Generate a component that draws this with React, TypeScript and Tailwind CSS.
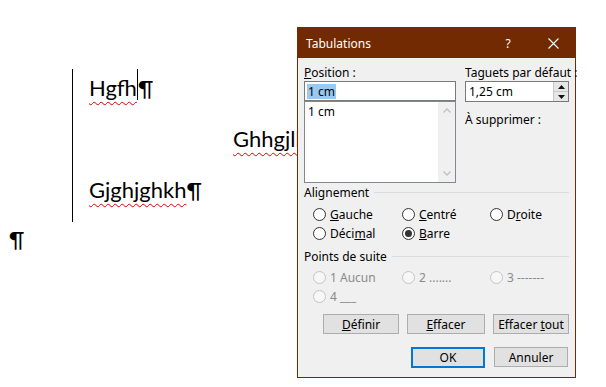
import React from "react";

const ui = { fontFamily: '"Noto Sans", "Open Sans", sans-serif' };
const doc = { fontFamily: 'Lato, "Open Sans", sans-serif' };

function Radio({ checked, disabled }: { checked?: boolean; disabled?: boolean }) {
  return (
    <span
      className={
        "inline-flex items-center justify-center w-[13px] h-[13px] rounded-full border shrink-0 " +
        (disabled ? "border-[#c4c4c4] bg-[#f7f7f7]" : "border-[#333333] bg-white")
      }
    >
      {checked && <span className="w-[7px] h-[7px] rounded-full bg-[#333333]" />}
    </span>
  );
}

function RadioItem({ label, checked, disabled }: { label: React.ReactNode; checked?: boolean; disabled?: boolean }) {
  return (
    <div className="flex items-center gap-[4px] h-[19px]">
      <Radio checked={checked} disabled={disabled} />
      <span className={disabled ? "text-[#8a8a8a]" : "text-black"}>{label}</span>
    </div>
  );
}

function GroupLabel({ children }: { children: React.ReactNode }) {
  return (
    <div className="flex items-center h-[15px]">
      <span className="pr-[5px]">{children}</span>
      <div className="flex-1 h-px bg-[#dcdcdc]" />
    </div>
  );
}

function Btn({ children, w, primary }: { children: React.ReactNode; w: string; primary?: boolean }) {
  return (
    <div
      className={
        "flex items-center justify-center bg-[#e1e1e1] " +
        w +
        (primary ? " h-[21px] border-2 border-[#0078d7]" : " h-[20px] border border-[#adadad]")
      }
    >
      {children}
    </div>
  );
}

export default function App() {
  return (
    <div className="relative w-[606px] h-[387px] bg-white overflow-hidden">
      {/* Document */}
      <div style={doc} className="text-[22px] text-black pt-[69px]">
        <div className="ml-[72px] border-l border-black">
          <div className="h-[51px] flex items-start pl-[16px] pt-[5px] leading-[28px]">
            <span className="underline decoration-wavy decoration-[#e00000] decoration-1 underline-offset-[5px]">Hgfh</span>
            <span className="inline-block w-px h-[31px] bg-black -mt-[5px]" />
            <span>¶</span>
          </div>
          <div className="h-[51px] flex items-start pl-[160px] pt-[5px] leading-[28px]">
            <span className="underline decoration-wavy decoration-[#e00000] decoration-1 underline-offset-[5px] whitespace-nowrap">Ghhgjlkjh</span>
          </div>
          <div className="h-[51px] flex items-start pl-[16px] pt-[5px] leading-[28px]">
            <span className="underline decoration-wavy decoration-[#e00000] decoration-1 underline-offset-[5px]">Gjghjghkh</span>
            <span>¶</span>
          </div>
        </div>
        <div className="pl-[9px] leading-[28px] mt-[3px]">¶</div>
      </div>

      {/* Dialog */}
      <div
        style={ui}
        className="absolute left-[297px] top-[27px] w-[279px] h-[351px] border border-[#722a03] bg-[#f0f0f0] text-[12px] leading-[15px] text-black"
      >
        <div className="h-[30px] bg-[#722a03] text-white flex items-center pl-[8px]">
          <span className="flex-1">Tabulations</span>
          <span className="w-[20px] text-center mr-[30px]">?</span>
          <svg width="11" height="11" viewBox="0 0 11 11" className="mr-[16px]">
            <path d="M0.5 0.5 L10.5 10.5 M10.5 0.5 L0.5 10.5" stroke="white" strokeWidth="1.1" />
          </svg>
        </div>

        <div className="px-[6px]">
          <div className="flex gap-[9px] mt-[7px]">
            <div className="w-[152px]">
              <div className="h-[15px]">
                <span className="underline">P</span>osition :
              </div>
              <div className="mt-[1px] h-[20px] bg-white border border-[#7a7a7a] flex items-center pl-[2px]">
                <span className="bg-[#99c9ef] px-[1px]">1 cm</span>
              </div>
              <div className="h-[82px] bg-white border border-[#828790] flex">
                <div className="flex-1 pl-[3px] pt-[2px]">1 cm</div>
                <div className="w-[17px] bg-[#f0f0f0] flex flex-col justify-between items-center py-[6px]">
                  <svg width="8" height="5" viewBox="0 0 8 5">
                    <path d="M0.5 4.5 L4 1 L7.5 4.5" fill="none" stroke="#c0c0c0" strokeWidth="1.3" />
                  </svg>
                  <svg width="8" height="5" viewBox="0 0 8 5">
                    <path d="M0.5 0.5 L4 4 L7.5 0.5" fill="none" stroke="#c0c0c0" strokeWidth="1.3" />
                  </svg>
                </div>
              </div>
            </div>
            <div className="w-[104px]">
              <div className="h-[15px] whitespace-nowrap">
                Ta<span className="underline">g</span>uets par défaut :
              </div>
              <div className="mt-[1px] h-[21px] bg-white border border-[#7a7a7a] flex items-center">
                <span className="flex-1 pl-[3px]">1,25 cm</span>
                <div className="w-[15px] h-full flex flex-col border-l border-[#c8c8c8] bg-[#e6e6e6]">
                  <div className="flex-1 flex items-center justify-center border-b border-[#c8c8c8]">
                    <svg width="7" height="4" viewBox="0 0 7 4"><path d="M0 4 L3.5 0 L7 4 Z" fill="#111" /></svg>
                  </div>
                  <div className="flex-1 flex items-center justify-center">
                    <svg width="7" height="4" viewBox="0 0 7 4"><path d="M0 0 L3.5 4 L7 0 Z" fill="#111" /></svg>
                  </div>
                </div>
              </div>
              <div className="mt-[10px]">À supprimer :</div>
            </div>
          </div>

          <div className="mt-[2px]">
            <GroupLabel>Alignement</GroupLabel>
          </div>
          <div className="mt-[5px] pl-[9px] grid grid-cols-[89px_88px_1fr]">
            <RadioItem label={<><span className="underline">G</span>auche</>} />
            <RadioItem label={<><span className="underline">C</span>entré</>} />
            <RadioItem label={<>D<span className="underline">r</span>oite</>} />
            <RadioItem label={<>Déci<span className="underline">m</span>al</>} />
            <RadioItem checked label={<><span className="underline">B</span>arre</>} />
          </div>

          <div className="mt-[6px]">
            <GroupLabel>Points de suite</GroupLabel>
          </div>
          <div className="mt-[4px] pl-[9px] grid grid-cols-[89px_88px_1fr]">
            <RadioItem disabled label="1 Aucun" />
            <RadioItem disabled label="2 ......." />
            <RadioItem disabled label="3 -------" />
            <RadioItem disabled label="4 ___" />
          </div>

          <div className="mt-[8px] flex gap-[8px] pl-[19px]">
            <Btn w="w-[76px]"><span><span className="underline">D</span>éfinir</span></Btn>
            <Btn w="w-[78px]"><span><span className="underline">E</span>ffacer</span></Btn>
            <Btn w="w-[76px]"><span>Effacer <span className="underline">t</span>out</span></Btn>
          </div>
          <div className="mt-[13px] flex gap-[9px] pl-[107px]">
            <Btn primary w="w-[74px]">OK</Btn>
            <Btn w="w-[74px]">Annuler</Btn>
          </div>
        </div>
      </div>
    </div>
  );
}
